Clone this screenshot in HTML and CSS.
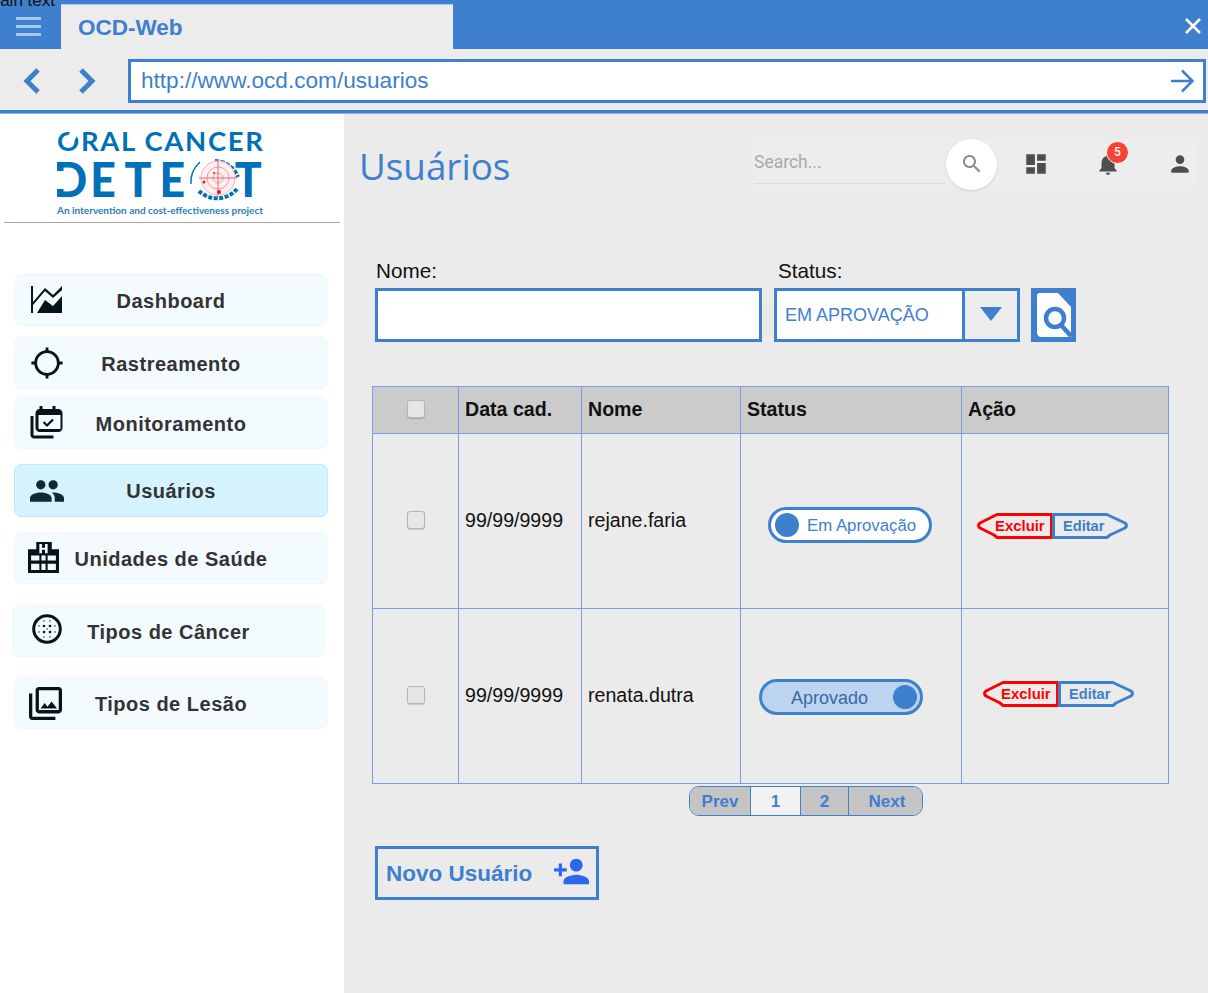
FILE: index.html
```html
<!DOCTYPE html>
<html lang="pt">
<head>
<meta charset="utf-8">
<title>OCD-Web</title>
<link rel="stylesheet" href="styles.css">
</head>
<body>
<div class="stray">Main text</div>
<div class="app">
  <header class="titlebar">
    <div class="burger"><span></span><span></span><span></span></div>
    <div class="tab">OCD-Web</div>
    <svg class="close" viewBox="0 0 16 16"><path d="M1 1l14 14M15 1L1 15"/></svg>
  </header>
  <div class="addressbar">
    <svg class="chev" viewBox="0 0 18 26"><path d="M15 2L4 13l11 11"/></svg>
    <svg class="chev chev-next" viewBox="0 0 18 26"><path d="M3 2l11 11L3 24"/></svg>
    <div class="url">
      <span class="url-text">http://www.ocd.com/usuarios</span>
      <svg class="go" viewBox="0 0 24 24"><path d="M1 12h21M12 1.500L22.500 12 12 22.500"/></svg>
    </div>
  </div>
  <div class="content">
    <aside class="sidebar">
      <div class="logo">
        <svg class="logo-svg" viewBox="0 0 210 90" role="img" aria-label="Oral Cancer Detect">
          <text class="l1" x="0" y="20" textLength="206" lengthAdjust="spacing">ORAL CANCER</text>
          <rect x="12" y="0" width="8" height="9" fill="#fff" transform="rotate(30 16 4)"/>
          <text class="l2" transform="scale(.95 1)" x="-4 35 71 108" y="66">DETE</text>
          <rect x="0" y="40" width="10" height="18" fill="#fff"/>
          <text class="l2" transform="scale(.95 1)" x="187" y="66">T</text>
          <g fill="none">
            <path d="M137 56A27 27 0 0 1 146 34" stroke="#0070b8" stroke-width="1.500" transform="translate(-3 -3)"/>
            <path d="M142 60A26 26 0 0 0 180 58M158 30A25 25 0 0 1 181 46" stroke="#0070b8" stroke-width="4" stroke-dasharray="4 1.500"/>
            <circle cx="161" cy="47" r="17" stroke="#f0b4b8" fill="#fdeff0"/>
            <circle cx="161" cy="47" r="11" stroke="#eb9ea4"/>
            <circle cx="161" cy="47" r="5" stroke="#eb9ea4"/>
            <path d="M142 47h38M161 28v38" stroke="#e26a72"/>
          </g>
          <circle cx="147" cy="51" r="1.500" fill="#e8141f"/>
          <circle cx="157" cy="42" r="1" fill="#e8141f"/>
          <circle cx="162" cy="61" r="2" fill="#e8141f"/>
          <text class="l3" x="0" y="83" textLength="206" lengthAdjust="spacingAndGlyphs">An intervention and cost-effectiveness project</text>
        </svg>
      </div>
      <nav class="nav">
        <a class="nav-item n1">
          <svg class="ic" viewBox="0 0 32 28"><path d="M0 0h2v27H0zM2 16L14 2l8 7 9-9v4l-9 8-8-7L2 19zM6 27l8-13 8 6 9-10v17z" fill="#05141a"/></svg>
          <span class="nav-label">Dashboard</span>
        </a>
        <a class="nav-item n2">
          <svg class="ic" viewBox="0 0 24 24"><path fill="#05141a" d="M20.940 11c-.46-4.170-3.770-7.480-7.940-7.940V1h-2v2.060C6.830 3.520 3.520 6.830 3.060 11H1v2h2.060c.46 4.170 3.770 7.480 7.940 7.940V23h2v-2.060c4.170-.46 7.480-3.770 7.940-7.940H23v-2h-2.060zM12 19c-3.870 0-7-3.130-7-7s3.130-7 7-7 7 3.130 7 7-3.130 7-7 7z"/></svg>
          <span class="nav-label">Rastreamento</span>
        </a>
        <a class="nav-item n3">
          <svg class="ic" viewBox="0 0 33 33"><path fill="#05141a" d="M9 0h3v3h10V0h3v3h3c2 0 4 2 4 4v15c0 2-2 4-4 4H9c-2 0-4-2-4-4V7c0-2 2-4 4-4zM8 9v14h22V9z"/><path d="M1.500 10v19c0 1 1 2 2 2H23" fill="none" stroke="#05141a" stroke-width="3"/><path d="M13 16l3.500 3.500 6-6" fill="none" stroke="#05141a" stroke-width="2.200"/></svg>
          <span class="nav-label">Monitoramento</span>
        </a>
        <a class="nav-item n4 active">
          <svg class="ic" viewBox="1 5 22 14"><path fill="#0e2a33" d="M16 11c1.660 0 2.990-1.340 2.990-3S17.660 5 16 5c-1.660 0-3 1.340-3 3s1.340 3 3 3zm-8 0c1.660 0 2.990-1.340 2.990-3S9.660 5 8 5C6.340 5 5 6.340 5 8s1.340 3 3 3zm0 2c-2.330 0-7 1.170-7 3.500V19h14v-2.500c0-2.330-4.670-3.500-7-3.500zm8 0c-.29 0-.62.02-.97.05 1.160.84 1.970 1.970 1.970 3.450V19h6v-2.500c0-2.330-4.670-3.500-7-3.500z"/></svg>
          <span class="nav-label">Usuários</span>
        </a>
        <a class="nav-item n5">
          <svg class="ic ic-h" viewBox="0 0 30 30"><path fill="#05141a" fill-rule="evenodd" d="M8 0h15v7h7v23H0V7h8zM11 2v9h2.500V7.500h3V11H19V2h-2.500v3.500h-3V2zM3 13v5h8v-5zm16 0v5h8v-5zm-6 0v5h4v-5zM3 21v6h8v-6zm16 0v6h8v-6zm-6 0v6h4v-6z"/></svg>
          <span class="nav-label">Unidades de Saúde</span>
        </a>
        <a class="nav-item n6">
          <svg class="ic" viewBox="0 0 30 30"><circle cx="15" cy="15" r="13.300" fill="none" stroke="#05141a" stroke-width="3"/><g fill="#05141a"><circle cx="12" cy="12" r="1.300"/><circle cx="18" cy="12" r="1.300"/><circle cx="12" cy="18" r="1.300"/><circle cx="18" cy="18" r="1.300"/><circle cx="12" cy="7" r=".7"/><circle cx="18" cy="7" r=".7"/><circle cx="7" cy="12" r=".7"/><circle cx="23" cy="12" r=".7"/><circle cx="7" cy="18" r=".7"/><circle cx="23" cy="18" r=".7"/><circle cx="12" cy="23" r=".7"/><circle cx="18" cy="23" r=".7"/><circle cx="15" cy="15" r=".7"/></g></svg>
          <span class="nav-label">Tipos de Câncer</span>
        </a>
        <a class="nav-item n7">
          <svg class="ic" viewBox="2 2 20 20"><path fill="#05141a" d="M20 4v12H8V4h12m0-2H8c-1.100 0-2 .9-2 2v12c0 1.100.9 2 2 2h12c1.100 0 2-.9 2-2V4c0-1.100-.9-2-2-2zm-8.500 9.670l1.690 2.260 2.480-3.100L19 15H9zM2 6v14c0 1.100.9 2 2 2h14v-2H4V6H2z"/></svg>
          <span class="nav-label">Tipos de Lesão</span>
        </a>
      </nav>
    </aside>
    <main class="main">
      <div class="head">
        <h1 class="title">Usuários</h1>
        <div class="tools">
          <div class="search-field">Search...</div>
          <div class="search-btn"><svg viewBox="0 0 24 24"><path fill="#8a8a8a" d="M15.500 14h-.79l-.28-.27C15.410 12.590 16 11.110 16 9.500 16 5.910 13.090 3 9.500 3S3 5.910 3 9.500 5.910 16 9.500 16c1.610 0 3.090-.59 4.230-1.570l.27.28v.79l5 4.990L20.490 19l-4.990-5zm-6 0C7.010 14 5 11.990 5 9.500S7.010 5 9.500 5 14 7.010 14 9.500 11.990 14 9.500 14z"/></svg></div>
          <svg class="tool t-dash" viewBox="0 0 24 24"><path d="M3 13h8V3H3v10zm0 8h8v-6H3v6zm10 0h8V11h-8v10zm0-18v6h8V3h-8z"/></svg>
          <div class="bell">
            <svg class="tool" viewBox="0 0 24 24"><path d="M12 22c1.100 0 2-.9 2-2h-4c0 1.100.89 2 2 2zm6-6v-5c0-3.070-1.640-5.640-4.500-6.320V4c0-.83-.67-1.500-1.500-1.500s-1.500.67-1.500 1.500v.68C7.630 5.360 6 7.920 6 11v5l-2 2v1h16v-1l-2-2z"/></svg>
            <span class="badge">5</span>
          </div>
          <svg class="tool t-user" viewBox="0 0 24 24"><path d="M12 12c2.210 0 4-1.790 4-4s-1.790-4-4-4-4 1.790-4 4 1.790 4 4 4zm0 2c-2.670 0-8 1.340-8 4v2h16v-2c0-2.660-5.330-4-8-4z"/></svg>
        </div>
      </div>

      <div class="filters">
        <label class="lbl">Nome:</label>
        <label class="lbl lbl-status">Status:</label>
        <span></span>
        <div class="input"></div>
        <div class="select"><span class="select-val">EM APROVAÇÃO</span><span class="select-arrow"><i></i></span></div>
        <div class="find">
          <svg viewBox="0 0 45 54"><path fill="#fff" d="M8 5h19l13 14v30H10c-2 0-4-2-4-4V7c0-1 1-2 2-2z"/><circle cx="24" cy="30" r="9" fill="#fff" stroke="#3e7fce" stroke-width="4.500"/><path d="M30 37l10 11" stroke="#3e7fce" stroke-width="4.500"/></svg>
        </div>
      </div>

      <table class="grid">
        <colgroup><col class="c1"><col class="c2"><col class="c3"><col class="c4"><col class="c5"></colgroup>
        <thead>
          <tr><th class="chk"><span class="box"></span></th><th>Data cad.</th><th>Nome</th><th>Status</th><th>Ação</th></tr>
        </thead>
        <tbody>
          <tr class="row1">
            <td class="chk"><span class="box"></span></td>
            <td>99/99/9999</td>
            <td>rejane.faria</td>
            <td><div class="toggle"><i class="dot"></i><span>Em Aprovação</span></div></td>
            <td>
              <div class="actions">
                <a class="act del"><svg viewBox="0 0 76 26"><path d="M20 1.500H74.500V24.500H20L17 22 3 15Q0 12.500 3 10L17 3z"/></svg><span>Excluir</span></a>
                <a class="act edit"><svg viewBox="0 0 78 26"><path d="M1.500 1.500H55L58 3 73 10Q76 12.500 73 15L58 22 55 24.500H1.500z"/></svg><span>Editar</span></a>
              </div>
            </td>
          </tr>
          <tr class="row2">
            <td class="chk"><span class="box"></span></td>
            <td>99/99/9999</td>
            <td>renata.dutra</td>
            <td><div class="toggle on"><span>Aprovado</span><i class="dot"></i></div></td>
            <td>
              <div class="actions">
                <a class="act del"><svg viewBox="0 0 76 26"><path d="M20 1.500H74.500V24.500H20L17 22 3 15Q0 12.500 3 10L17 3z"/></svg><span>Excluir</span></a>
                <a class="act edit"><svg viewBox="0 0 78 26"><path d="M1.500 1.500H55L58 3 73 10Q76 12.500 73 15L58 22 55 24.500H1.500z"/></svg><span>Editar</span></a>
              </div>
            </td>
          </tr>
        </tbody>
      </table>

      <div class="pager">
        <a class="pg pg-prev">Prev</a><a class="pg pg-1">1</a><a class="pg pg-2">2</a><a class="pg pg-next">Next</a>
      </div>

      <a class="new-user">
        <span>Novo Usuário</span>
        <svg viewBox="1 4 22 16"><path d="M15 12c2.210 0 4-1.790 4-4s-1.790-4-4-4-4 1.790-4 4 1.790 4 4 4zm-9-2V7H4v3H1v2h3v3h2v-3h3v-2H6zm9 4c-2.670 0-8 1.340-8 4v2h16v-2c0-2.660-5.330-4-8-4z"/></svg>
      </a>
    </main>
  </div>
</div>
</body>
</html>
```
FILE: styles.css
```css
* { box-sizing: border-box; }
html, body { margin: 0; padding: 0; height: 993px; overflow: hidden; }
body { font-family: "Liberation Sans", Arial, sans-serif; background: #fff; color: #111; position: relative; }

.stray { position: absolute; left: -14px; top: -9px; font-size: 17px; color: #111; z-index: 5; white-space: nowrap; }

.app { display: flex; flex-direction: column; height: 993px; }

/* title bar */
.titlebar { height: 49px; background: #3e7fce; display: flex; align-items: flex-end; flex: none; }
.burger { width: 61px; height: 49px; padding: 17px 20px 0 16px; display: flex; flex-direction: column; gap: 5.500px; }
.burger span { display: block; height: 2.500px; background: #a9c8ec; }
.tab { width: 392px; height: 45px; background: #ececec; color: #3e7fce; font-weight: 700; font-size: 22.500px; line-height: 46px; padding-left: 17px; border-top: 1px solid #a9c8ec; }
.close { width: 16px; height: 16px; margin: 0 7px 15px auto; fill: none; stroke: #fff; stroke-width: 2.500; }

/* address bar */
.addressbar { height: 64px; flex: none; background: #ececec; border-bottom: 3px solid #3e7fce; box-shadow: 0 1px 0 #8db4e4; display: flex; align-items: flex-start; padding: 10px 2px 0 23px; }
.chev { width: 18px; height: 26px; margin-top: 9px; fill: none; stroke: #3e7fce; stroke-width: 5; flex: none; }
.chev-next { margin-left: 37px; margin-right: 32px; }
.url { flex: 1; height: 44px; background: #fff; border: 3px solid #3e7fce; display: flex; align-items: center; padding: 0 9px 0 10px; color: #3e7fce; font-size: 22.600px; }
.go { width: 24px; height: 24px; margin-left: auto; fill: none; stroke: #3e7fce; stroke-width: 2.500; }

/* layout */
.content { flex: 1; display: flex; min-height: 0; padding-top: 1px; }
.sidebar { width: 344px; flex: none; background: #fff; }
.main { flex: 1; background: #ebebeb; min-width: 0; }

/* logo */
.logo { margin: 0 4px; height: 109px; border-bottom: 1px solid #aaa696; padding: 17px 0 0 53px; }
.logo-svg { display: block; width: 210px; height: 90px; }
.l1 { font-family: "Lato", sans-serif; font-weight: 700; font-size: 27.500px; fill: #0070b8; }
.l2 { font-family: "Lato", sans-serif; font-weight: 900; font-size: 47px; fill: #0070b8; }
.l3 { font-family: "Lato", sans-serif; font-weight: 700; font-size: 10px; fill: #2b7dbb; }

/* nav */
.nav { display: flex; flex-direction: column; padding-top: 51px; }
.nav-item { display: grid; grid-template-columns: 1fr auto 1fr; align-items: center; width: 314px; height: 52px; margin-left: 14px; background: #f3fbff; border: 1px solid #edf8fd; border-radius: 7px; }
.nav-label { font-weight: 700; font-size: 20px; letter-spacing: .5px; color: #333; white-space: nowrap; grid-column: 2; grid-row: 1; padding-top: 2px; }
.ic { grid-column: 1; grid-row: 1; display: block; width: 32px; height: 32px; margin-left: 15px; }
.n1 .ic { height: 28px; margin-left: 16px; }
.n2 { margin-top: 11px; }
.n2 .ic { width: 34px; height: 34px; margin-left: 15px; }
.n3 { margin-top: 8px; }
.n3 .ic { width: 34px; height: 33px; margin-top: -2px; }
.n4 { margin-top: 15px; height: 53px; }
.n4 .ic { width: 34px; height: 22px; }
.n5 { margin-top: 15px; }
.n5 .ic { width: 31px; height: 31px; margin-left: 13px; margin-top: -2px; }
.n6 { margin-top: 21px; margin-left: 12px; width: 313px; }
.n6 .ic { width: 30px; height: 30px; margin-left: 19px; margin-top: -4px; }
.n7 { margin-top: 20px; }
.n7 .ic { width: 33px; height: 33px; margin-left: 14px; }
.active { background: #d5f3ff; border-color: #bfeafa; }

/* header */
.head { display: flex; align-items: center; padding: 26px 11px 0 15px; height: 73px; }
.title { margin: 6px 0 0; font-family: "Open Sans", sans-serif; font-weight: 400; font-size: 36.800px; color: #3e7fce; line-height: 47px; }
.tools { margin-left: auto; width: 447px; height: 47px; display: flex; align-items: center; background: #ededed; position: relative; padding-left: 4px; }
.search-field { width: 191px; height: 43px; margin-top: -2px; border-bottom: 1px solid #dcdcdc; font-family: "Roboto", sans-serif; font-size: 17.500px; color: #aaa; line-height: 42px; }
.search-btn { width: 51px; height: 51px; margin: 1px 0 0 1px; background: #fff; border-radius: 50%; box-shadow: 0 1px 3px rgba(0,0,0,.12); display: flex; align-items: center; justify-content: center; }
.search-btn svg { width: 24px; height: 24px; }
.tool { display: block; width: 26px; height: 26px; fill: #4e4e4e; }
.t-dash { margin-left: 26px; }
.bell { position: relative; margin-left: 46px; }
.badge { position: absolute; left: 11px; top: -10px; width: 23px; height: 23px; background: #f44336; border: 1px solid #fff; border-radius: 50%; color: #fff; font-family: "Roboto", sans-serif; font-weight: 500; font-size: 12px; line-height: 21px; text-align: center; }
.t-user { margin-left: 46px; }

/* filters */
.filters { display: grid; grid-template-columns: 387px 246px 45px; column-gap: 12px; row-gap: 6px; margin: 73px 0 0 31px; width: 702px; }
.filters .find { margin-left: -1px; }
.lbl { font-size: 20.700px; line-height: 22px; color: #111; padding-left: 1px; }
.lbl-status { padding-left: 4px; }
.input { height: 54px; background: #fff; border: 3px solid #3e7fce; }
.select { height: 54px; background: #fff; border: 3px solid #3e7fce; display: flex; align-items: center; color: #3e7fce; font-size: 18px; }
.select-val { flex: 1; padding-left: 8px; }
.select-arrow { width: 55px; height: 100%; background: #ececec; border-left: 3px solid #3e7fce; display: flex; align-items: center; justify-content: center; }
.select-arrow i { width: 0; height: 0; border-left: 11px solid transparent; border-right: 11px solid transparent; border-top: 14px solid #3e7fce; margin-top: -3px; }
.find { width: 45px; height: 54px; background: #3e7fce; }
.find svg { display: block; width: 45px; height: 54px; }

/* table */
.grid { border-collapse: collapse; table-layout: fixed; width: 796px; margin: 44px 0 0 28px; font-size: 19.600px; color: #111; }
.c1 { width: 86px; } .c2 { width: 123px; } .c3 { width: 159px; } .c4 { width: 221px; } .c5 { width: 207px; }
.grid th, .grid td { border: 1px solid #7c9bf0; padding: 0 0 2px 6px; text-align: left; }
.grid th { height: 47px; background: #cbcbcb; font-weight: 700; }
.row1 td { height: 175px; }
.row2 td { height: 175px; }
.grid .chk { padding: 0; text-align: center; }
.box { display: block; width: 18px; height: 18px; margin: 0 auto 3px; background: #e6e6e6; border: 1px solid #b5b5b5; border-radius: 3px; box-shadow: 0 1px 1px rgba(0,0,0,.15); }
.toggle { width: 164px; height: 36px; border: 3px solid #3e7fce; border-radius: 18px; background: #fff; color: #3e7fce; font-size: 16.800px; display: flex; align-items: center; padding: 0 4px; gap: 8px; margin: 9px 0 0 21px; white-space: nowrap; }
.toggle span { padding-top: 2px; }
.dot { display: block; width: 24px; height: 24px; background: #3e7fce; border-radius: 50%; flex: none; }
.toggle.on { background: #bdd4f0; color: #3a68a8; font-size: 18px; margin: 4px 0 0 12px; padding: 0 3px 0 29px; justify-content: space-between; gap: 0; }
.actions { display: flex; margin: 11px 0 0 9px; }
.row2 .actions { margin: 0 0 3px 15px; }
.act { position: relative; display: flex; align-items: center; height: 26px; font-weight: 700; font-size: 14.600px; }
.act svg { position: absolute; left: 0; top: 0; height: 26px; fill: none; stroke-width: 3; stroke-linejoin: round; overflow: visible; }
.act span { position: relative; }
.del { width: 75px; color: #f00; padding-left: 18px; font-size: 14.900px; }
.del svg { width: 76px; stroke: #f00; }
.edit { width: 78px; color: #3e7fce; padding-left: 11px; }
.edit svg { width: 78px; stroke: #3e7fce; }

/* pager */
.pager { display: flex; width: 234px; height: 30px; margin: 2px 0 0 345px; border: 1px solid #3e7fce; border-radius: 10px; overflow: hidden; }
.pg { display: flex; align-items: center; justify-content: center; background: #c4c4c4; color: #3e7fce; font-weight: 700; font-size: 17px; border-left: 1px solid #3e7fce; padding-top: 1px; }
.pg-prev { width: 60px; border-left: 0; }
.pg-1 { width: 50px; background: #f2f2f2; }
.pg-2 { width: 48px; }
.pg-next { width: 74px; padding-left: 3px; }

/* new user */
.new-user { display: flex; align-items: center; width: 224px; height: 54px; margin: 30px 0 0 31px; border: 3px solid #3e7fce; color: #3e7fce; font-weight: 700; font-size: 22.500px; padding: 1px 0 0 8px; }
.new-user svg { width: 35px; height: 27px; margin: -4px 0 0 22px; fill: #2f66ee; }
```
